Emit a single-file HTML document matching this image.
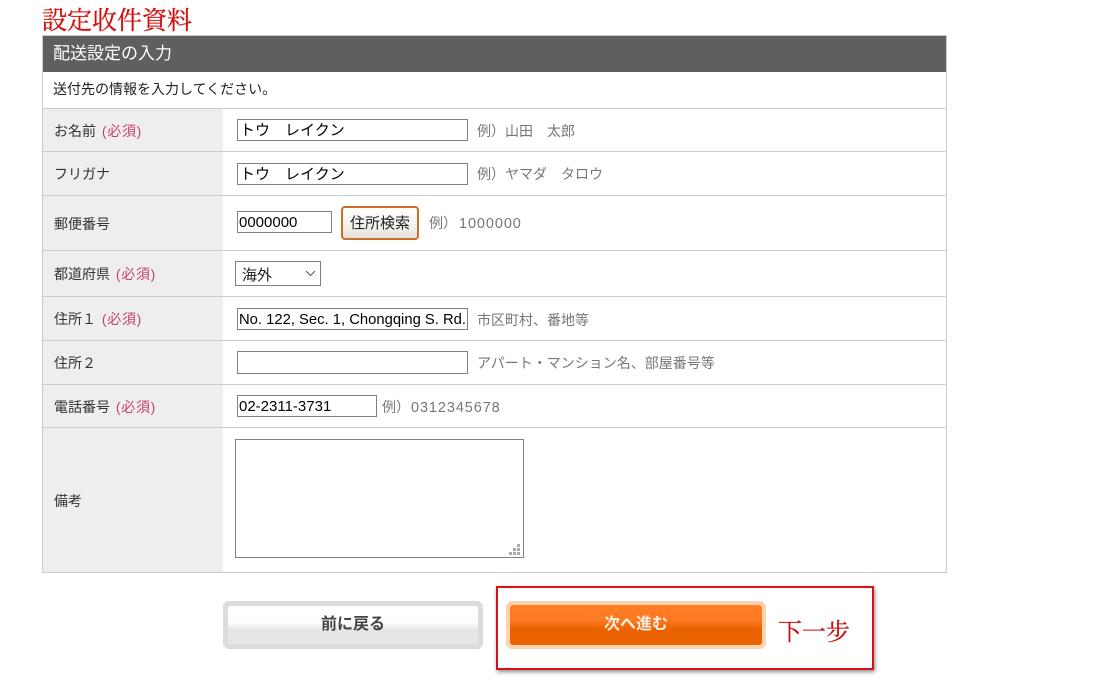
<!DOCTYPE html>
<html lang="ja"><head><meta charset="utf-8"><title>配送設定の入力</title>
<style>
html,body{margin:0;padding:0;background:#fff;width:1093px;height:700px;overflow:hidden}
body{position:relative;font-family:"Liberation Sans","Noto Sans CJK JP",sans-serif;font-size:14px;color:#333}
.a{position:absolute;white-space:nowrap}
.l{position:absolute;left:43px;width:903px;height:1px;background:#ccc}
.t{position:absolute;white-space:nowrap;font-size:14px;line-height:18px;color:#333}
.t b{font-weight:normal;color:#c8406f;margin-left:2px;letter-spacing:.7px}
.h{position:absolute;white-space:nowrap;font-size:14px;line-height:18px;color:#777}
.n{letter-spacing:.9px;margin-left:2px;font-size:14.5px}
.i{position:absolute;box-sizing:border-box;border:1px solid #808080;background:#fff;color:#000;font-size:15px;line-height:22px;padding-left:2px;white-space:nowrap;overflow:hidden}
</style></head><body>
<div class="a" style="left:42px;top:4px;font:25px/30px 'Noto Serif CJK SC',serif;color:#d40f0f;-webkit-text-stroke:.3px #d40f0f">設定收件資料</div>

<div class="a" style="left:42px;top:35px;width:905px;height:538px;box-sizing:border-box;border:1px solid #ccc"></div>
<div class="a" style="left:43px;top:36px;width:903px;height:36px;background:#5f5f5f"></div>
<div class="a" style="left:53px;top:44px;font-size:17px;line-height:20px;color:#fff">配送設定の入力</div>
<div class="a" style="left:53px;top:80px;font-size:14px;line-height:18px;color:#222">送付先の情報を入力してください。</div>

<div class="a" style="left:43px;top:109px;width:180px;height:463px;background:#eee"></div>
<div class="l" style="top:108px"></div>
<div class="l" style="top:151px"></div>
<div class="l" style="top:195px"></div>
<div class="l" style="top:250px"></div>
<div class="l" style="top:296px"></div>
<div class="l" style="top:340px"></div>
<div class="l" style="top:384px"></div>
<div class="l" style="top:427px"></div>

<div class="t" style="left:54px;top:122px">お名前 <b>(必須)</b></div>
<div class="t" style="left:54px;top:165px">フリガナ</div>
<div class="t" style="left:54px;top:215px">郵便番号</div>
<div class="t" style="left:54px;top:265px">都道府県 <b>(必須)</b></div>
<div class="t" style="left:54px;top:310px">住所１ <b>(必須)</b></div>
<div class="t" style="left:54px;top:354px">住所２</div>
<div class="t" style="left:54px;top:398px">電話番号 <b>(必須)</b></div>
<div class="t" style="left:54px;top:492px">備考</div>

<div class="i" style="left:237px;top:119px;width:231px;height:22px">トウ　レイクン</div>
<div class="h" style="left:477px;top:122px">例）山田　太郎</div>

<div class="i" style="left:237px;top:163px;width:231px;height:22px">トウ　レイクン</div>
<div class="h" style="left:477px;top:165px">例）ヤマダ　タロウ</div>

<div class="i" style="left:237px;top:211px;width:95px;height:22px;padding-left:1px">0000000</div>
<div class="a" style="left:341px;top:206px;width:78px;height:34px;box-sizing:border-box;border:2px solid #c96f2b;border-radius:4px;background:linear-gradient(#fff,#f4f1ec 60%,#e6e2dc);color:#222;font-size:15px;line-height:32px;text-align:center">住所検索</div>
<div class="h" style="left:429px;top:214px">例）<span class="n">1000000</span></div>

<div class="a" style="left:235px;top:261px;width:86px;height:25px;box-sizing:border-box;border:1px solid #808080;background:#fff;color:#222;font-size:15px;line-height:27px;padding-left:6px">海外
<svg style="position:absolute;left:69px;top:8px" width="11" height="7" viewBox="0 0 11 7"><path d="M1 1l4.5 4.5L10 1" fill="none" stroke="#555" stroke-width="1"/></svg></div>

<div class="i" style="left:237px;top:308px;width:231px;height:22px;font-size:14.8px;padding-left:1px">No. 122, Sec. 1, Chongqing S. Rd.</div>
<div class="h" style="left:477px;top:311px">市区町村、番地等</div>

<div class="i" style="left:237px;top:351px;width:231px;height:23px"></div>
<div class="h" style="left:477px;top:354px">アパート・マンション名、部屋番号等</div>

<div class="i" style="left:237px;top:395px;width:140px;height:22px;padding-left:1px">02-2311-3731</div>
<div class="h" style="left:382px;top:398px">例）<span class="n" style="margin-left:1px">0312345678</span></div>

<div class="a" style="left:235px;top:439px;width:289px;height:119px;box-sizing:border-box;border:1px solid #808080;background:#fff"></div>
<svg class="a" style="left:509px;top:544px" width="12" height="11" viewBox="0 0 12 11"><g fill="#aaa"><rect x="8" y="0" width="3" height="3"/><rect x="4" y="4" width="3" height="3"/><rect x="8" y="4" width="3" height="3"/><rect x="0" y="8" width="3" height="3"/><rect x="4" y="8" width="3" height="3"/><rect x="8" y="8" width="3" height="3"/></g></svg>

<!-- back button -->
<div class="a" style="left:223px;top:601px;width:260px;height:48px;background:#dcdcdc;clip-path:polygon(4px 0,256px 0,260px 4px,260px 44px,256px 48px,4px 48px,0 44px,0 4px)"></div>
<div class="a" style="left:227px;top:605px;width:252px;height:40px;box-sizing:border-box;border:1px solid #ddd;border-radius:3px;background:linear-gradient(#fff 0,#fff 42%,#e6e6e6 62%,#e6e6e6 100%);text-align:center;font-size:16px;font-weight:bold;line-height:37px;color:#444">前に戻る</div>

<!-- next button -->
<div class="a" style="left:506px;top:601px;width:260px;height:48px;background:#fdd2ae;clip-path:polygon(4px 0,256px 0,260px 4px,260px 44px,256px 48px,4px 48px,0 44px,0 4px)"></div>
<div class="a" style="left:510px;top:605px;width:252px;height:40px;border-radius:3px;background:linear-gradient(#ff7d25 0,#fd7a22 38%,#ea6100 60%,#ea6100 100%);text-align:center;font-size:16px;font-weight:bold;line-height:40px;color:#fdeee0">次へ進む</div>

<!-- red annotation -->
<div class="a" style="left:496px;top:586px;width:378px;height:84px;box-sizing:border-box;border:2px solid #d8101a;box-shadow:1px 2px 4px rgba(0,0,0,.45)"></div>
<div class="a" style="left:778px;top:615px;font:24px/30px 'Noto Serif CJK SC',serif;color:#c8100f;-webkit-text-stroke:.25px #c8100f">下一步</div>
</body></html>
